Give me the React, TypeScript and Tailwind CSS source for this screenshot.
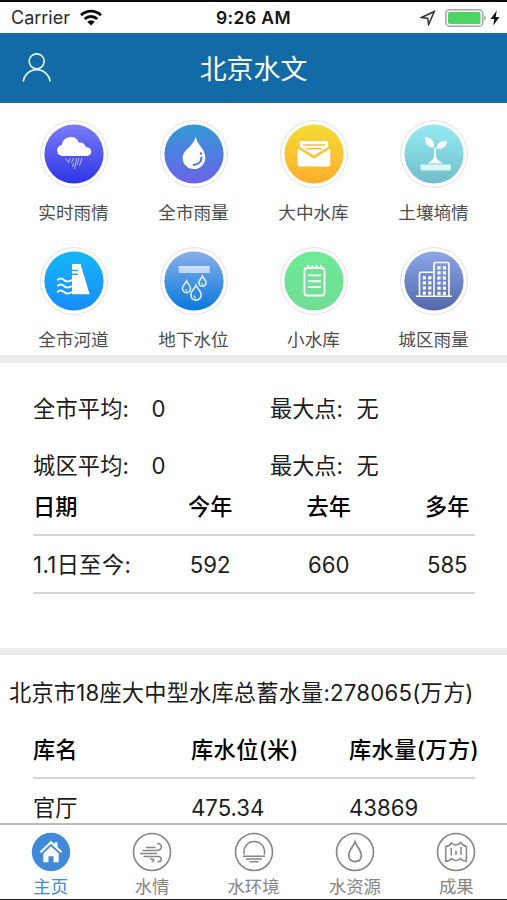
import type { ReactNode } from "react";

const FONT = "font-[Inter,'Noto_Sans_CJK_SC',sans-serif]";

function Badge({ id, from, to, children }: { id: string; from: string; to: string; children: ReactNode }) {
  return (
    <svg viewBox="0 0 68 68" className="size-[68px]" fill="none">
      <defs>
        <linearGradient id={id} x1="0" y1="0" x2="0" y2="1">
          <stop offset="0" stopColor={from} />
          <stop offset="1" stopColor={to} />
        </linearGradient>
      </defs>
      <circle cx="34" cy="34" r="33.4" fill="#fff" stroke="#dedede" strokeWidth="0.9" />
      <circle cx="34" cy="34" r="29.6" fill={`url(#${id})`} />
      {children}
    </svg>
  );
}

const windows = (x: number, y: number, cols: number, rows: number) =>
  Array.from({ length: cols * rows }, (_, i) => (
    <rect key={`${x}-${i}`} x={x + (i % cols) * 5.4} y={y + Math.floor(i / cols) * 5.1} width="3.2" height="3.2" fill="#fff" />
  ));

const menu: { label: string; icon: ReactNode }[] = [
  {
    label: "实时雨情",
    icon: (
      <Badge id="rain" from="#7c7cf6" to="#2b34e6">
        <path d="M22.500 36a5.600 5.600 0 0 1-.7-11.100A8.900 8.900 0 0 1 38.800 22.500c3.800-.5 6.300 1.500 6.800 4.600 3.600.2 5.700 1.800 5.700 4.400 0 2.900-2.200 4.500-5.100 4.500z" fill="#fff" />
        <path d="M25.500 38.500l2.500 3M30 38l-1.500 5M33.500 38l-2 5M36.500 38l-2 11M39 38l-2 7M42 38l-2.500 7.500M33.500 43l-1 4" stroke="#b9bdfc" strokeWidth="1" />
      </Badge>
    ),
  },
  {
    label: "全市雨量",
    icon: (
      <Badge id="drop" from="#3299d5" to="#6b63e8">
        <path d="M35.700 16.300c.5 8 9.600 12 9.600 21.200A11.200 11.200 0 0 1 34 49c-6.500 0-11.300-4.700-11.300-11 0-8.500 11-11 13-21.700z" fill="#fff" />
        <path d="M41.500 37.500c0 4-3.200 7-7.700 7.300" stroke="#4e7bdd" strokeWidth="2.200" strokeLinecap="round" />
        <circle cx="41" cy="33.500" r="1.300" fill="#4e7bdd" />
      </Badge>
    ),
  },
  {
    label: "大中水库",
    icon: (
      <Badge id="mail" from="#f4dc35" to="#ffad2f">
        <path d="M19.700 27v-4.500a1.500 1.500 0 0 1 1.500-1.500h25.600a1.500 1.500 0 0 1 1.500 1.500V27L34 35.500z" fill="#fff" />
        <path d="M23 25h22M26 28.700h16" stroke="#f9bf32" strokeWidth="1.500" />
        <path d="M17.700 28.500 34 38.700l16.300-10.200v16.300a1.600 1.600 0 0 1-1.600 1.600H19.300a1.600 1.600 0 0 1-1.600-1.600z" fill="#fff" />
      </Badge>
    ),
  },
  {
    label: "土壤墒情",
    icon: (
      <Badge id="soil" from="#94ecf3" to="#72bdcb">
        <path d="M25 17c6.500.2 9.700 4.500 9.200 10.600C28.200 27.800 24.500 23.500 25 17zM47 21.200c-.2 5.500-4.500 8.300-10.600 7.400.2-5.300 4.800-8.400 10.600-7.400z" fill="#fff" />
        <path d="M35 28v12" stroke="#fff" strokeWidth="1.700" />
        <path d="M34 36.500h2.200c.5 3.200 3.500 4.800 6.800 7H27.500c3.500-2.200 6-3.800 6.500-7z" fill="#fff" />
        <path d="M20.500 44.500h30.300V49a1.500 1.500 0 0 1-1.500 1.500H22a1.500 1.500 0 0 1-1.500-1.500z" fill="#d9f6f8" />
      </Badge>
    ),
  },
  {
    label: "全市河道",
    icon: (
      <Badge id="river" from="#15b7f5" to="#188cff">
        <path d="M32 17h8.600l9 30.300H32z" fill="#fff" />
        <path d="M32 23.500h6M32 27.200h6" stroke="#1aa8fa" strokeWidth="1.400" />
        <path d="M17.300 33.200c2.500-2.400 4.600-2.200 7 0s4.500 1.800 7.700-.2M17.300 39.200c2.500-2.400 4.600-2.200 7 0s4.500 1.800 7.700-.2M17.300 45.200c2.500-2.400 4.600-2.200 7 0s4.500 1.800 7.700-.2" stroke="#fff" strokeWidth="2" />
      </Badge>
    ),
  },
  {
    label: "地下水位",
    icon: (
      <Badge id="ground" from="#89afeb" to="#0878dc">
        <rect x="18.700" y="19" width="31" height="7" fill="#c2d9f7" />
        <path d="M18.700 20h31" stroke="#e2edfb" strokeWidth="1" />
        <path d="M26.500 34c1 2.700 4 4.300 4 7.600a4 4 0 0 1-8 0c0-3.300 3-4.900 4-7.600zM42.500 29c.9 2.500 3.600 3.900 3.600 6.700a3.600 3.600 0 0 1-7.200 0c0-2.800 2.700-4.200 3.600-6.700zM36 38.200c1.200 3.400 5.200 5.600 5.200 9.700a5.200 5.200 0 0 1-10.400 0c0-4.100 4-6.300 5.200-9.700z" stroke="#e6f1fd" strokeWidth="1.600" />
        <path d="M25.500 42.500l1.500 1M41.500 36.500l1.500 1M34 48.500c.2 1.500 1 2.200 2 2.400" stroke="#e6f1fd" strokeWidth="1.300" />
      </Badge>
    ),
  },
  {
    label: "小水库",
    icon: (
      <Badge id="notes" from="#6dea96" to="#72dc96">
        <rect x="24.500" y="21" width="20" height="27.500" rx="2.500" stroke="#fff" strokeWidth="1.800" />
        <path d="M28.200 18.300v3.500M32.400 18.300v3.500M36.600 18.300v3.500M40.800 18.300v3.500" stroke="#fff" strokeWidth="1.900" />
        <path d="M28.200 28.400h12.700M28.200 34.200h12.700M28.200 40h12.700" stroke="#fff" strokeWidth="1.900" />
      </Badge>
    ),
  },
  {
    label: "城区雨量",
    icon: (
      <Badge id="city" from="#8ca6e8" to="#5268aa">
        <path d="M19.500 49V26.500a1.200 1.200 0 0 1 1.200-1.200H33M34 49V16.700a1.200 1.200 0 0 1 1.200-1.200h12.600a1.200 1.200 0 0 1 1.200 1.200V49M16 49.300h36" stroke="#fff" strokeWidth="1.600" />
        {windows(22.8, 29.2, 2, 4)}
        {windows(37.4, 19.2, 2, 6)}
      </Badge>
    ),
  },
];

const tabs: { label: string; icon: ReactNode }[] = [
  {
    label: "主页",
    icon: (
      <>
        <circle cx="20" cy="20" r="19.200" fill="#408ad8" />
        <path d="M9.500 20.300 20 10.300l10.500 10" stroke="#fff" strokeWidth="2.200" />
        <path d="M23.700 10.300h2.800v5.500l-2.800-2.600zM12.300 21.500 20 14.300l7.700 7.200v8.800h-5.200v-6.100h-5v6.100h-5.200z" fill="#fff" />
      </>
    ),
  },
  {
    label: "水情",
    icon: (
      <>
        <circle cx="20" cy="20" r="18.500" />
        <path d="M14 15.500h9.500M10.500 18.600H24c6.800 0 7-7.400 1.200-7.100M8 21.600h17M11.500 24.500h14.500c4.800 0 4.400 5.400-.5 5.200M18 27h2.200c2.300.2 2 2.700-.6 2.700" strokeWidth="1.500" />
      </>
    ),
  },
  {
    label: "水环境",
    icon: (
      <>
        <circle cx="20" cy="20" r="18.500" />
        <path d="M10.300 22.500a10.300 10.300 0 1 1 19.900 0M9 24.200h22M12 27h16M15.500 29.700h9" strokeWidth="1.500" />
      </>
    ),
  },
  {
    label: "水资源",
    icon: (
      <>
        <circle cx="20" cy="20" r="18.500" />
        <path d="M20 9.800c1.200 4.200 6.300 8.500 6.300 13.500 0 4-2.600 6.300-6.300 6.300s-6.300-2.300-6.300-6.300c0-5 5.100-9.300 6.300-13.500z" strokeWidth="1.700" />
      </>
    ),
  },
  {
    label: "成果",
    icon: (
      <>
        <circle cx="20" cy="20" r="18.500" />
        <path d="M9.800 14.300c2.200 0 4.200-1.200 5.600-3.300 2.600 2.600 6.500 2.600 9.200-.5 1.400 2.100 3.400 3.500 5.800 3.800v15c-2.300 0-4.400-1-5.900-2.800-2.700 2.400-6.300 2.400-9.100 0-1.400 1.800-3.400 2.800-5.600 2.800zM15.300 16v7.500M20 18.500V23M25 15v8" strokeWidth="1.500" />
      </>
    ),
  },
];

function StatusBar() {
  return (
    <div className="flex h-[33px] shrink-0 items-center border-t-2 border-[#0b0b0b] px-[11px]">
      <div className="flex flex-1 items-center gap-[9px]">
        <span className="w-[60px] whitespace-nowrap pt-px text-[18px] text-[#2b2b2b]">Carrier</span>
        <svg viewBox="0 0 22 17" className="h-[17px] w-[22px]" fill="none" stroke="#0b0b0b" strokeWidth="2.900">
          <path d="M1 6.200a14.200 14.200 0 0 1 20 0M4.700 10a9 9 0 0 1 12.600 0" />
          <path d="M11 16.500 7.200 12.700a5.400 5.400 0 0 1 7.600 0z" fill="#0b0b0b" stroke="none" />
        </svg>
      </div>
      <span className="w-[78px] whitespace-nowrap pt-px text-center text-[17.500px] font-semibold tracking-[0.400px] text-[#141414]">9:26 AM</span>
      <div className="flex flex-1 items-center justify-end">
        <svg viewBox="0 0 16 16" className="mr-[9px] size-4" fill="none" stroke="#333" strokeWidth="1.500">
          <path d="M14.300 1.500 1.500 7.500l6.300.9.800 6.200z" />
        </svg>
        <svg viewBox="0 0 42 18" className="mr-[3px] h-[18px] w-[42px]" fill="none">
          <rect x=".8" y=".8" width="37" height="16.400" rx="3.800" stroke="#a3a3a3" strokeWidth="1.400" />
          <rect x="3" y="3" width="32.500" height="12" rx="1.800" fill="#4cd562" />
          <path d="M39.200 6.500c2 .8 2 4.200 0 5z" fill="#999" />
        </svg>
        <svg viewBox="0 0 10 16" className="-mr-[4px] h-4 w-[10px]" fill="#111">
          <path d="M6.800.5.500 9h3.800L3.200 15.500 9.500 7H5.700z" />
        </svg>
      </div>
    </div>
  );
}

function Summary({ name }: { name: string }) {
  return (
    <div className="flex h-[57px] items-center pl-[33px] pt-px text-[22.200px]">
      <span className="w-[118.500px] tracking-[0.200px]">{name}</span>
      <span className="w-[118.500px]">0</span>
      <span className="w-[86.500px]">最大点:</span>
      <span>无</span>
    </div>
  );
}

export default function App() {
  return (
    <div className={`flex h-[900px] w-[507px] flex-col overflow-hidden bg-white leading-none text-[#1c1c1c] ${FONT}`}>
      <StatusBar />
      <header className="flex h-[70px] shrink-0 items-center bg-[#126ba6] pl-[22px] text-white">
        <svg viewBox="0 0 30 30" className="size-[30px]" fill="none" stroke="#e5f4fc" strokeWidth="1.700">
          <circle cx="14.700" cy="8.300" r="7.500" />
          <path d="M1.300 28.500a13.500 13.500 0 0 1 26.800 0" />
        </svg>
        <h1 className="flex-1 pr-[52px] pt-[2px] text-center text-[26.900px]">北京水文</h1>
      </header>
      <main className="min-h-0 flex-1 overflow-hidden">
        <section className="grid h-[252px] grid-cols-4 content-start gap-y-[11px] px-[13.500px] pt-[17px]">
          {menu.map((m) => (
            <div key={m.label} className="flex h-[116px] flex-col items-center">
              {m.icon}
              <span className="mt-[16px] text-[17.600px] text-[#4d4d4d]">{m.label}</span>
            </div>
          ))}
        </section>
        <div className="h-2 bg-[#ebebeb]" />
        <section className="h-[285px] pt-[17px]">
          <Summary name="全市平均:" />
          <Summary name="城区平均:" />
          <div className="-mt-px flex h-[41px] items-start pl-[33px] pt-[3px] text-[22.200px] font-medium text-black">
            <span className="w-[118px]">日期</span>
            <span className="w-[118.500px] text-center">今年</span>
            <span className="w-[118.500px] text-center">去年</span>
            <span className="w-[118.500px] text-center">多年</span>
          </div>
          <div className="ml-[33px] h-[60px] w-[442px] border-y-2 border-[#d6d6d6]">
            <div className="flex h-full w-[474px] items-center pt-[2px] text-[22.200px]">
              <span className="w-[118px] whitespace-nowrap tracking-[0.400px]">1.1日至今:</span>
              <span className="w-[118.500px] text-center">592</span>
              <span className="w-[118.500px] text-center">660</span>
              <span className="w-[118.500px] text-center">585</span>
            </div>
          </div>
        </section>
        <div className="h-[7px] bg-[#ebebeb]" />
        <section className="pt-[27px]">
          <p className="whitespace-nowrap pl-[9px] text-[22.200px] tracking-[0.220px]">北京市18座大中型水库总蓄水量:278065(万方)</p>
          <div className="mt-[35px] flex h-[38px] pl-[33px] text-[22.200px] font-medium text-black">
            <span className="w-[158px]">库名</span>
            <span className="w-[158px] tracking-[0.400px]">库水位(米)</span>
            <span className="whitespace-nowrap tracking-[0.400px]">库水量(万方)</span>
          </div>
          <div className="ml-[33px] flex h-[60px] w-[442px] items-center border-t-2 border-[#d6d6d6] text-[22.200px]">
            <span className="w-[158px]">官厅</span>
            <span className="w-[158px]">475.34</span>
            <span>43869</span>
          </div>
        </section>
      </main>
      <nav className="flex h-[77px] shrink-0 border-b border-t-2 border-b-[#222] border-t-[#bcbcbc] bg-white pt-[7px]">
        {tabs.map((t, i) => (
          <div key={t.label} className="flex flex-1 flex-col items-center">
            <svg viewBox="0 0 40 40" className="size-[40px]" fill="none" stroke={i === 0 ? "none" : "#858585"} strokeWidth="1.600">
              {t.icon}
            </svg>
            <span className={`mt-[6px] text-[17.400px] ${i === 0 ? "text-[#408ad8]" : "text-[#858585]"}`}>{t.label}</span>
          </div>
        ))}
      </nav>
    </div>
  );
}
